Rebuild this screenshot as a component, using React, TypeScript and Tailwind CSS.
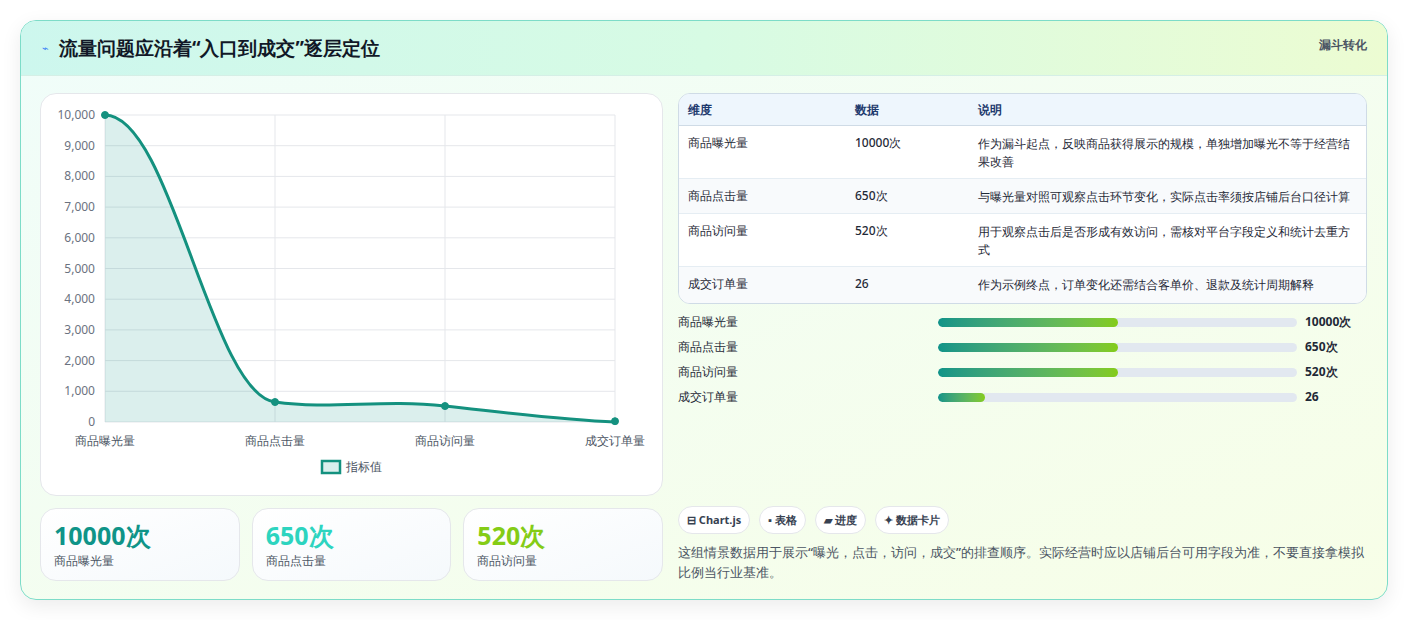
const rows = [
  { d: "商品曝光量", v: "10000次", s: "作为漏斗起点，反映商品获得展示的规模，单独增加曝光不等于经营结果改善", h: "h-[53px]" },
  { d: "商品点击量", v: "650次", s: "与曝光量对照可观察点击环节变化，实际点击率须按店铺后台口径计算", h: "h-[35px]" },
  { d: "商品访问量", v: "520次", s: "用于观察点击后是否形成有效访问，需核对平台字段定义和统计去重方式", h: "h-[53px]" },
  { d: "成交订单量", v: "26", s: "作为示例终点，订单变化还需结合客单价、退款及统计周期解释", h: "h-[36px]" },
];

const bars = [
  { l: "商品曝光量", w: "50%", v: "10000次" },
  { l: "商品点击量", w: "50%", v: "650次" },
  { l: "商品访问量", w: "50%", v: "520次" },
  { l: "成交订单量", w: "13%", v: "26" },
];

const Chart = () => {
  const ys = [0, 1000, 2000, 3000, 4000, 5000, 6000, 7000, 8000, 9000, 10000];
  const xs = [64, 234, 404, 574];
  const xl = ["商品曝光量", "商品点击量", "商品访问量", "成交订单量"];
  const py = (v: number) => 328 - (v / 10000) * 307;
  const curve = "M64,21 C130,21 170,300 234,308 C290,316 340,305 404,312 C460,318 520,326 574,328";
  return (
    <svg width="621" height="401" viewBox="0 0 621 401" className="block">
      {ys.map((v) => (
        <g key={v}>
          <line x1="64" x2="574" y1={py(v)} y2={py(v)} stroke="#e5e7eb" />
          <text x="54" y={py(v) + 4} textAnchor="end" fontSize="12" fill="#6b7280">
            {v.toLocaleString("en-US")}
          </text>
        </g>
      ))}
      {xs.map((x, i) => (
        <g key={x}>
          <line x1={x} x2={x} y1="21" y2="328" stroke="#e5e7eb" />
          <text x={x} y="351" textAnchor="middle" fontSize="12" fill="#4b5563">{xl[i]}</text>
        </g>
      ))}
      <path d={curve + " L574,328 L64,328 Z"} fill="rgba(15,148,136,0.15)" />
      <path d={curve} fill="none" stroke="#14917f" strokeWidth="3" />
      {[10000, 650, 520, 26].map((v, i) => (
        <circle key={i} cx={xs[i]} cy={py(v)} r="3.5" fill="#14917f" stroke="#14917f" />
      ))}
      <rect x="281" y="367" width="18" height="12" fill="rgba(15,148,136,0.15)" stroke="#14917f" strokeWidth="2.5" />
      <text x="305" y="377" fontSize="12" fill="#4b5563">指标值</text>
    </svg>
  );
};

export default function App() {
  return (
    <div className="w-[1408px] h-[620px] bg-white p-5 font-['Noto_Sans_CJK_SC','Noto_Sans',sans-serif]">
      <div className="h-[580px] rounded-2xl border border-[#7ddcc8] overflow-hidden shadow-[0_6px_20px_rgba(0,0,0,0.08)] bg-gradient-to-br from-[#f0fdfa] to-[#f7fee7]">
        <div className="h-[55px] flex items-center justify-between pl-[21px] pr-5 bg-gradient-to-r from-[#cdf7ee] via-[#d7fbe4] to-[#ecfcd2] border-b border-[#d5efe6]">
          <div className="flex items-center gap-[10px]">
            <span className="text-[11px] text-[#3b82f6]">⌁</span>
            <h1 className="text-[19px] font-bold text-[#111827]">流量问题应沿着“入口到成交”逐层定位</h1>
          </div>
          <span className="self-start mt-[16px] text-xs font-bold text-[#4b5563]">漏斗转化</span>
        </div>
        <div className="flex gap-[15px] pl-[19px] pr-5 pt-[17px]">
          <div className="w-[623px] flex flex-col gap-3">
            <div className="h-[403px] rounded-2xl border border-[#e5e7eb] bg-white overflow-hidden">
              <Chart />
            </div>
            <div className="grid grid-cols-3 gap-3">
              {[
                ["10000次", "text-[#0f9488]", "商品曝光量"],
                ["650次", "text-[#2dd4bf]", "商品点击量"],
                ["520次", "text-[#84cc16]", "商品访问量"],
              ].map(([v, c, l]) => (
                <div key={l} className="h-[73px] rounded-2xl border border-[#e5e7eb] bg-gradient-to-br from-white to-[#f5f9fc] px-[13px] pt-[10px]">
                  <div className={`text-[25px] leading-8 font-bold ${c}`}>{v}</div>
                  <div className="text-xs text-[#4b5563] mt-[2px]">{l}</div>
                </div>
              ))}
            </div>
          </div>
          <div className="w-[690px] flex flex-col">
            <div className="rounded-xl border border-[#cfdbe6] overflow-hidden bg-white text-xs">
              <div className="h-[32px] flex items-center bg-[#eef6fd] text-[#1e3a6e] font-bold border-b border-[#cfdbe6]">
                <div className="w-[176px] pl-[9px]">维度</div>
                <div className="w-[123px]">数据</div>
                <div>说明</div>
              </div>
              {rows.map((r, i) => (
                <div key={r.d} className={`${r.h} flex pt-[9px] text-[#1f2937] font-medium ${i % 2 ? "bg-[#f8fafc]" : "bg-white"} ${i < 3 ? "border-b border-[#e5edf3]" : ""}`}>
                  <div className="w-[176px] pl-[9px]">{r.d}</div>
                  <div className="w-[123px]">{r.v}</div>
                  <div className="w-[380px] leading-[18px]">{r.s}</div>
                </div>
              ))}
            </div>
            <div className="mt-[9px] flex flex-col gap-[7px]">
              {bars.map((b) => (
                <div key={b.l} className="h-[18px] flex items-center text-xs font-medium text-[#1f2937]">
                  <div className="w-[260px]">{b.l}</div>
                  <div className="w-[359px] h-[9px] rounded-full bg-[#e2e8f0] overflow-hidden">
                    <div className="h-full rounded-full bg-gradient-to-r from-[#0f9488] to-[#84cc16]" style={{ width: b.w }} />
                  </div>
                  <div className="ml-2 font-bold">{b.v}</div>
                </div>
              ))}
            </div>
            <div className="mt-[100px] flex gap-[9px] text-[11px] font-bold text-[#374151]">
              {["⊟ Chart.js", "▪ 表格", "▰ 进度", "✦ 数据卡片"].map((t) => (
                <span key={t} className="h-[28px] px-[8px] flex items-center rounded-full border border-[#e5e7eb] bg-white">{t}</span>
              ))}
            </div>
            <p className="mt-[8px] text-[13px] leading-5 text-[#4b5563] font-medium">
              这组情景数据用于展示“曝光，点击，访问，成交”的排查顺序。实际经营时应以店铺后台可用字段为准，不要直接拿模拟比例当行业基准。
            </p>
          </div>
        </div>
      </div>
    </div>
  );
}
